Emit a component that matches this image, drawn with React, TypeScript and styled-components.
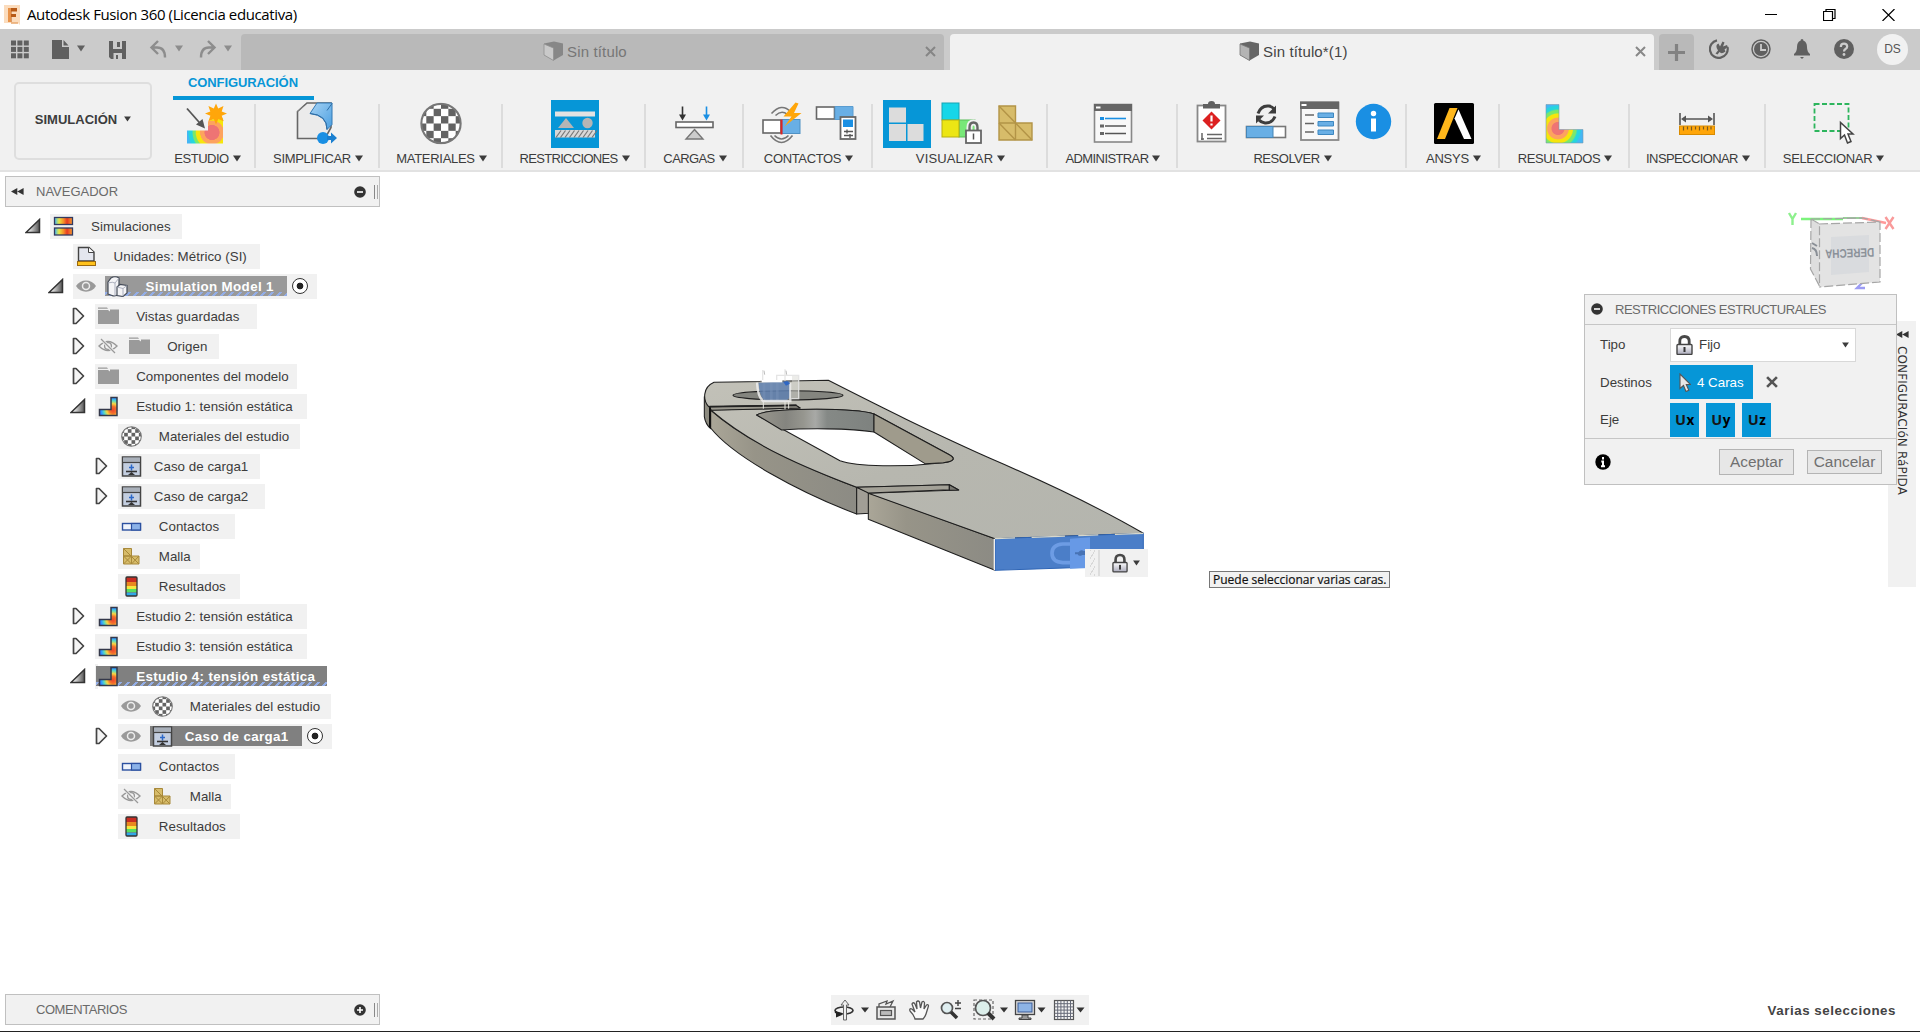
import React from 'react';
import styled, { createGlobalStyle, css } from 'styled-components';

const Global = createGlobalStyle`
  * { box-sizing: border-box; }
  html, body { margin: 0; padding: 0; background: #fff; }
  body { font-family: "Liberation Sans", Arial, sans-serif; color: #3c3c3c; overflow: hidden; }
  svg { display: block; flex: none; }
`;

const Window = styled.div`
  width: 1920px;
  height: 1032px;
  display: flex;
  flex-direction: column;
  background: #fff;
  border-bottom: 1px solid #222;
  overflow: hidden;
`;

/* ---------- title bar ---------- */
const TitleBar = styled.header`
  height: 29px;
  flex: none;
  display: flex;
  align-items: center;
  padding: 0 25px 0 3px;
  gap: 7px;
`;
const AppTitle = styled.span`
  font: 15px/29px "Open Sans", "Noto Sans", sans-serif;
  letter-spacing: -0.38px;
  color: #000;
  flex: 1;
  white-space: nowrap;
`;
const WindowButtons = styled.div`
  display: flex;
  gap: 46px;
  align-items: center;
`;

/* ---------- tab strip ---------- */
const TabStrip = styled.div`
  height: 41px;
  flex: none;
  display: flex;
  background: #cbcbcb;
  align-items: flex-end;
`;
const QuickTools = styled.div`
  width: 241px;
  height: 41px;
  flex: none;
`;
const DocTab = styled.div<{ $active?: boolean; $w: number }>`
  width: ${p => p.$w}px;
  height: 36px;
  flex: none;
  display: flex;
  align-items: center;
  background: ${p => (p.$active ? '#f1f1f1' : '#b9b9b9')};
  border-radius: 4px 4px 0 0;
  color: ${p => (p.$active ? '#444' : '#767676')};
  font-size: 15px;
  margin-right: ${p => (p.$active ? 5 : 6)}px;
  padding: 0 8px 2px 0;
`;
const TabCaption = styled.div<{ $pad: number }>`
  flex: 1;
  display: flex;
  align-items: center;
  gap: 3px;
  padding-left: ${p => p.$pad}px;
  white-space: nowrap;
  letter-spacing: 0.15px;
`;
const NewTab = styled.div`
  width: 35px;
  height: 36px;
  flex: none;
  background: #b9b9b9;
  border-radius: 4px 4px 0 0;
  display: grid;
  place-items: center;
`;
const Account = styled.div`
  flex: 1;
  height: 41px;
  display: flex;
  align-items: center;
  gap: 21.5px;
  padding: 0 0 1px 15px;
`;
const Avatar = styled.div`
  width: 31px;
  height: 31px;
  margin-left: 2px;
  border-radius: 50%;
  background: #f1f1f1;
  display: grid;
  place-items: center;
  font-size: 12px;
  color: #555;
`;

/* ---------- ribbon ---------- */
const Ribbon = styled.div`
  height: 102px;
  flex: none;
  display: flex;
  background: #f1f1f1;
  border-bottom: 2px solid #e2e2e2;
`;
const Workspace = styled.button`
  width: 138px;
  height: 78px;
  margin: 12px 7px 0 14px;
  flex: none;
  border: 2px solid #dedede;
  border-radius: 5px;
  background: #f1f1f1;
  display: flex;
  align-items: center;
  justify-content: center;
  gap: 7px;
  padding: 0 0 4px;
  font: bold 13px "Liberation Sans", Arial, sans-serif;
  color: #3c3c3c;
`;
const RibbonMain = styled.div`
  display: flex;
  flex-direction: column;
`;
const RibbonTab = styled.div`
  width: 141px;
  height: 30px;
  margin-left: 14px;
  padding: 5px 0 0 15px;
  border-bottom: 4px solid #0696d7;
  font-weight: bold;
  font-size: 13px;
  line-height: 15px;
  letter-spacing: -0.1px;
  color: #0696d7;
`;
const Groups = styled.div`
  display: flex;
`;
const Group = styled.div<{ $w: number; $last?: boolean }>`
  width: ${p => p.$w}px;
  height: 68px;
  flex: none;
  display: flex;
  flex-direction: column;
  align-items: center;
  background: ${p => (p.$last ? 'none' : 'linear-gradient(#dcdcdc,#dcdcdc) right 4px / 2px 64px no-repeat')};
`;
const IconRow = styled.div`
  display: flex;
  gap: 6px;
`;
const IconCell = styled.div<{ $on?: boolean }>`
  width: 48px;
  height: 48px;
  background: ${p => (p.$on ? '#0696d7' : 'transparent')};
`;
const GroupLabel = styled.div<{ $ls: number }>`
  display: flex;
  align-items: center;
  gap: 4px;
  height: 20px;
  padding-top: 1px;
  font-size: 13px;
  letter-spacing: ${p => p.$ls}px;
  white-space: nowrap;
  svg { margin-bottom: 1px; }
`;

/* ---------- work area ---------- */
const Stage = styled.main`
  flex: 1;
  position: relative;
  display: flex;
  justify-content: space-between;
`;
const Model = styled.svg`
  position: absolute;
  left: 690px;
  top: 178px;
`;
const LeftColumn = styled.aside`
  width: 380px;
  display: flex;
  flex-direction: column;
  padding: 4px 0 6px 5px;
`;
const PanelBar = styled.div`
  height: 31px;
  flex: none;
  border: 1px solid #c0c0c0;
  background: #f1f1f1;
  display: flex;
  align-items: center;
  font-size: 13px;
  color: #6a6a6a;
  padding: 0 1px 0 5px;
`;
const PanelName = styled.span<{ $ls: number }>`
  flex: 1;
  padding-left: 12px;
  letter-spacing: ${p => p.$ls}px;
`;
const BarStart = styled.span`
  width: 13px;
`;
const Grip = styled.span`
  width: 4px;
  height: 14px;
  margin-left: 8px;
  border-left: 1px solid #888;
  border-right: 1px solid #aaa;
`;
const Tree = styled.ul`
  list-style: none;
  margin: 4px 0 0;
  padding: 0;
  flex: 1;
`;
const TreeRow = styled.li<{ $level: number }>`
  height: 30px;
  display: flex;
  align-items: center;
  padding-left: ${p => 20 + p.$level * 22.6}px;
`;
const Twist = styled.span<{ $closed?: boolean }>`
  width: 25px;
  flex: none;
  padding-left: ${p => (p.$closed ? 1 : 0)}px;
`;
const Chip = styled.div<{ $w: number; $bare?: boolean }>`
  width: ${p => p.$w}px;
  height: 25px;
  flex: none;
  display: flex;
  align-items: center;
  padding-left: 3px;
  background: ${p => (p.$bare ? 'linear-gradient(90deg,#f1f1f1 3px,#fff 3px)' : '#f1f1f1')};
`;
const EyeSlot = styled.span`
  width: 31px;
  flex: none;
`;
const Entry = styled.div<{ $sel?: number; $shade?: string; $text: number; $hatch?: boolean }>`
  height: 20px;
  display: flex;
  align-items: center;
  white-space: nowrap;
  font-size: 13.33px;
  letter-spacing: 0.03px;
  > svg { margin-right: ${p => p.$text}px; }
  ${p =>
    p.$sel &&
    css`
      width: ${p.$sel}px;
      margin-left: -2px;
      padding-left: 2px;
      color: #fff;
      font-weight: bold;
      letter-spacing: 0.38px;
      background: ${p.$shade};
    `}
  ${p =>
    p.$hatch &&
    css`
      background: repeating-linear-gradient(135deg, #93ade6 0 2.2px, transparent 2.2px 5.6px) left bottom / 100% 4px no-repeat, ${p.$shade};
    `}
`;
const RadioMark = styled.span`
  width: 16px;
  height: 16px;
  margin-left: 5px;
  border: 1.5px solid #333;
  border-radius: 50%;
  background: radial-gradient(circle, #222 0 3px, #fff 3.7px);
`;

const NavBar = styled.div`
  position: absolute;
  left: 831px;
  bottom: 6px;
  width: 258px;
  height: 30px;
  background: #f1f1f1;
`;
const MiniBar = styled.div`
  position: absolute;
  left: 1085px;
  top: 377px;
  width: 63px;
  height: 28px;
  background: #f1f1f1;
  display: flex;
  align-items: center;
  gap: 5px;
  padding-left: 5px;
`;
const MiniGrip = styled.span`
  width: 10px;
  height: 26px;
  margin-right: 7px;
  border-right: 2px solid #ddd;
  background: repeating-linear-gradient(120deg, #d8d8d8 0 1px, transparent 1px 4px) left / 5px 100% no-repeat;
`;
const Tooltip = styled.div`
  position: absolute;
  left: 1209px;
  top: 399px;
  width: 181px;
  height: 17px;
  border: 1px solid #767676;
  background: #f1f1f1;
  padding-left: 3px;
  font: 12px/15px "Open Sans", "Noto Sans", sans-serif;
  color: #111;
  white-space: nowrap;
  -webkit-text-stroke: 0.2px #111;
`;

const RightColumn = styled.aside`
  width: 336px;
  display: flex;
  flex-direction: column;
`;
const CubeArea = styled.div`
  height: 122px;
  flex: none;
  padding: 39px 0 0 200px;
`;
const Dialog = styled.section`
  width: 313px;
  height: 191px;
  flex: none;
  position: relative;
  z-index: 1;
  border: 1px solid #c0c0c0;
  background: #f1f1f1;
  display: flex;
  flex-direction: column;
`;
const DialogHead = styled.div`
  height: 30px;
  border-bottom: 1px solid #c6c6c6;
  display: flex;
  align-items: center;
  gap: 12px;
  padding-left: 6px;
  font-size: 13px;
  letter-spacing: -0.48px;
  color: #6a6a6a;
`;
const Fields = styled.div`
  flex: 1;
  padding: 1px 0 0 15px;
`;
const Field = styled.div`
  height: 37.5px;
  display: grid;
  grid-template-columns: 70px 1fr;
  align-items: center;
  font-size: 13.33px;
`;
const Controls = styled.div`
  display: flex;
  align-items: center;
  gap: 7px;
`;
const Select = styled.div`
  width: 186px;
  height: 34px;
  border: 1px solid #d8d8d8;
  background: #fff;
  display: flex;
  align-items: center;
  padding: 0 6px 0 5px;
  gap: 6px;
  span { flex: 1; }
`;
const Targets = styled.button`
  width: 83px;
  height: 34px;
  border: 0;
  margin-right: 6px;
  background: #0696d7;
  color: #fff;
  font: 13.33px "Liberation Sans", Arial, sans-serif;
  display: flex;
  align-items: center;
  gap: 6px;
  padding: 0 0 0 9px;
  white-space: nowrap;
`;
const Axis = styled.button`
  width: 29px;
  height: 34px;
  border: 0;
  padding: 0;
  background: #0696d7;
  color: #161616;
  font: bold 14.5px/34px "Open Sans", sans-serif;
  letter-spacing: -0.5px;
  small { font-size: 13.5px; color: #000; margin-left: 1px; }
`;
const DialogFoot = styled.div`
  height: 46px;
  border-top: 1px solid #c6c6c6;
  display: flex;
  align-items: center;
  padding: 0 14px 0 10px;
`;
const Push = styled.button<{ $tall?: boolean }>`
  width: 75px;
  height: ${p => (p.$tall ? 26 : 24)}px;
  margin-left: ${p => (p.$tall ? 'auto' : '13px')};
  padding: 0;
  border: 1px solid #b4b4b4;
  background: #e7e7e7;
  font: 15.4px "Liberation Sans", Arial, sans-serif;
  color: #707070;
`;
const QuickSetup = styled.div`
  width: 28px;
  height: 266px;
  margin: -164px 0 0 304px;
  flex: none;
  background: #f1f1f1;
  display: flex;
  flex-direction: column;
  align-items: center;
  padding-top: 10px;
  gap: 8px;
`;
const QuickName = styled.span`
  writing-mode: vertical-rl;
  font: 12px "DejaVu Sans", sans-serif;
  letter-spacing: 0.12px;
  white-space: nowrap;
  color: #333;
`;
const Status = styled.div`
  margin-top: auto;
  padding: 0 24px 13px 0;
  text-align: right;
  font-weight: bold;
  font-size: 13.33px;
  letter-spacing: 0.55px;
  color: #444;
`;

/* ---------- drawings ---------- */
const Caret = ({ c = '#3c3c3c', w = 8, h = 7 }: { c?: string; w?: number; h?: number }) => (
  <svg width={w} height={h} viewBox="0 0 8 7"><path d="M0 0.5h8L4 6.5z" fill={c} /></svg>
);
const Rewind = () => (
  <svg width="13" height="7" viewBox="0 0 13 7"><path d="M6.3 0v7L0 3.500zM12.600 0v7L6.300 3.500z" fill="#333" /></svg>
);
const Disc = ({ kind }: { kind: 'minus' | 'plus' }) => (
  <svg width="12" height="12" viewBox="0 0 12 12">
    <circle cx="6" cy="6" r="5.8" fill="#333" />
    <path d={kind === 'minus' ? 'M3 6h6' : 'M3 6h6M6 3v6'} stroke="#fff" strokeWidth="1.6" />
  </svg>
);
const DocCube = ({ dim }: { dim?: boolean }) => (
  <svg width="21" height="20" viewBox="0 0 21 20" opacity={dim ? 0.6 : 1}>
    <path d="M1 2.5L11 0.5 20 2.5V14L10.5 19.5 1 14z" fill="#666" />
    <path d="M1 3L10.5 7V19.5L1 14z" fill={dim ? '#d4d4d4' : '#b4b4b4'} stroke="#777" strokeWidth="0.8" />
  </svg>
);
const Cross = ({ c = '#888', s = 11, w = 2 }: { c?: string; s?: number; w?: number }) => (
  <svg width={s} height={s} viewBox="0 0 11 11"><path d="M1 1l9 9M10 1L1 10" stroke={c} strokeWidth={w} /></svg>
);

const checkerCells: React.ReactNode[] = [];
for (let r = 0; r < 6; r++)
  for (let c = 0; c < 6; c++)
    if ((r + c) % 2) checkerCells.push(<rect key={`${r}-${c}`} x={c * 7 - 1} y={r * 7 - 1} width="7" height="7" fill="#636363" />);
const Checker = ({ size, x = 0, y = 0 }: { size: number; x?: number; y?: number }) => (
  <svg x={x} y={y} width={size} height={size} viewBox="0 0 40 40">
    <clipPath id="checkerClip"><circle cx="20" cy="20" r="18.6" /></clipPath>
    <circle cx="20" cy="20" r="18.6" fill="#fff" />
    <g clipPath="url(#checkerClip)">{checkerCells}</g>
    <circle cx="20" cy="20" r="18.7" fill="none" stroke="#777" strokeWidth="2" />
  </svg>
);

const Defs = styled.svg`
  position: absolute;
`;
const heatColors = ['#ee7474', '#ee7474', '#fda35e', '#fda35e', '#f6e50c', '#f6e50c', '#7be86a', '#7be86a', '#25d6dd', '#25d6dd', '#45b6f5'];
const Palettes = () => (
  <Defs width="0" height="0">
    <defs>
      <radialGradient id="heatStudy" gradientUnits="userSpaceOnUse" cx="29" cy="33" r="27">
        {heatColors.map((c, i) => (
          <stop key={i} offset={[0, 0.27, 0.29, 0.43, 0.45, 0.58, 0.62, 0.7, 0.74, 0.84, 0.9][i]} stopColor={c} />
        ))}
      </radialGradient>
      <radialGradient id="heatResult" gradientUnits="userSpaceOnUse" cx="17" cy="29" r="29">
        {heatColors.map((c, i) => (
          <stop key={i} offset={[0, 0.21, 0.24, 0.36, 0.39, 0.5, 0.54, 0.62, 0.68, 0.76, 0.82][i]} stopColor={c} />
        ))}
      </radialGradient>
      <radialGradient id="heatSmall" gradientUnits="userSpaceOnUse" cx="15" cy="14" r="14">
        <stop offset="0" stopColor="#f0432c" /><stop offset="0.25" stopColor="#f4712c" /><stop offset="0.45" stopColor="#fbd540" />
        <stop offset="0.65" stopColor="#59dcc0" /><stop offset="0.82" stopColor="#35a0ff" /><stop offset="1" stopColor="#2f6cff" />
      </radialGradient>
      <linearGradient id="heatBar" x1="0" x2="1">
        <stop offset="0" stopColor="#3cb8ff" /><stop offset="0.25" stopColor="#e8e640" /><stop offset="0.5" stopColor="#f59028" />
        <stop offset="0.7" stopColor="#e83a22" /><stop offset="1" stopColor="#f8a030" />
      </linearGradient>
      <linearGradient id="blueFace" x1="0" y1="0" x2="1" y2="1"><stop offset="0" stopColor="#a8d4f5" /><stop offset="1" stopColor="#4a9ee0" /></linearGradient>
      <linearGradient id="twist" x1="0" x2="1"><stop offset="0.2" stopColor="#eee" /><stop offset="1" stopColor="#555" /></linearGradient>
      <linearGradient id="body" x1="0" y1="0" x2="0" y2="1"><stop offset="0" stopColor="#fff" /><stop offset="1" stopColor="#aab" /></linearGradient>
      <linearGradient id="top" x1="0" y1="0" x2="1" y2="1"><stop offset="0" stopColor="#c2c1b8" /><stop offset="0.5" stopColor="#b7b7af" /><stop offset="1" stopColor="#b4b5ae" /></linearGradient>
      <linearGradient id="side" x1="0" x2="1"><stop offset="0" stopColor="#aaa698" /><stop offset="0.3" stopColor="#979488" /><stop offset="1" stopColor="#8c8b84" /></linearGradient>
      <linearGradient id="wall" x1="0" x2="1"><stop offset="0" stopColor="#9a988e" /><stop offset="0.25" stopColor="#84847f" /><stop offset="0.4" stopColor="#96968f" /><stop offset="0.5" stopColor="#a8a9a6" /><stop offset="0.6" stopColor="#858986" /><stop offset="1" stopColor="#7e827f" /></linearGradient>
    </defs>
  </Defs>
);

const range = (n: number) => Array.from({ length: n }, (_, i) => i);

const ribbonIcons: Record<string, React.ReactNode> = {
  study: (
    <g transform="translate(-1 0)">
      <path d="M4 31H25V22Q33 17 40 19V44H4z" fill="url(#heatStudy)" />
      <path d="M4 9L19 26" stroke="#555" strokeWidth="1.8" /><path d="M22 29l-9-4 6.500-5.500z" fill="#555" />
      <path d="M33 4l2.200 5 5.300-2.500-1.800 5.500 5.300 2-5.300 2.300 2 5.400-5.400-2.200L33 25l-2.200-5.500-5.400 2.200 2-5.400L22 14l5.300-2-1.900-5.500 5.400 2.500z" fill="#ffa60a" />
    </g>
  ),
  simplify: (
    <g transform="translate(-1 0)">
      <path d="M4.500 12L14 3.500H38V28L32 39H4.500z" fill="#ebebeb" stroke="#666" strokeWidth="1.600" />
      <path d="M4.500 12l6-5" stroke="#888" />
      <path d="M24 3.500H39V25L34 30Q34 16 17 14z" fill="url(#blueFace)" stroke="#3179b5" strokeWidth="1" />
      <path d="M34 11L39 4M17 14Q34 15 34 30" stroke="#2f6ea6" fill="none" />
      <circle cx="30" cy="38.500" r="6" fill="#1a8fe3" /><path d="M34 36.500h4V33l6 5.500-6 5.500v-3.500h-4z" fill="#1a7fd0" />
    </g>
  ),
  checker: <Checker size={42} x={2} y={3} />,
  supports: (
    <>
      <rect x="4" y="12" width="40" height="5" fill="#e2e2e2" /><path d="M7 28.500L15 18.500 23 28.500z" fill="#b5b5b5" /><circle cx="36.500" cy="23.500" r="5.200" fill="#b5b5b5" />
      <rect x="4" y="30.500" width="40" height="7.500" fill="#d8d8d8" />
      {range(9).map(i => <path key={i} d={`M${5 + i * 4.5} 38l5-7`} stroke="#777" strokeWidth="1.200" />)}
    </>
  ),
  loads: (
    <>
      <path d="M11.500 7v11" stroke="#333" strokeWidth="1.600" /><path d="M8 15h7l-3.500 6z" fill="#333" />
      <path d="M35.500 7v11" stroke="#1a8fe3" strokeWidth="1.600" /><path d="M32 15h7l-3.500 6z" fill="#1a8fe3" />
      <rect x="5" y="22.500" width="37" height="5.500" fill="#fff" stroke="#666" strokeWidth="1.600" /><path d="M23.500 30L32 39.500H15z" fill="#ccc" stroke="#777" strokeWidth="1.400" />
    </>
  ),
  contacts: (
    <g transform="translate(0.5 0)">
      <path d="M13 14Q23 3 32 12M17 16q6-6 12-1M12 36q11 14 22 0M16 36q7 7 14 0" fill="none" stroke="#777" strokeWidth="1.600" />
      <rect x="4.500" y="20.500" width="18" height="13" fill="#fff" stroke="#666" strokeWidth="1.600" /><rect x="23.500" y="20" width="18" height="14" fill="#69afe5" stroke="#4f91c4" />
      <path d="M23 20v15" stroke="#d22" strokeWidth="2" /><path d="M37 3L25 17h8L26 27 43 13.500h-7.500L40 4z" fill="#ffa60a" />
    </g>
  ),
  manual: (
    <>
      <rect x="4.500" y="7.500" width="18" height="12" fill="#fff" stroke="#666" strokeWidth="1.600" /><path d="M23 7h18v13H23z" fill="#69afe5" stroke="#5a9cd0" />
      <rect x="28.500" y="17.500" width="15" height="22" fill="#fff" stroke="#666" strokeWidth="1.800" /><rect x="31" y="20" width="10" height="7.500" fill="#1a8fe3" />
      <path d="M32 32h9M32 36h9M35 30v4M38 34.500v4" stroke="#555" strokeWidth="1.300" />
    </>
  ),
  blocks: (
    <g fill="#dcdcdc"><rect x="6" y="8" width="17" height="15" /><rect x="6" y="24.500" width="17" height="17" /><rect x="24.500" y="24.500" width="16" height="17" /></g>
  ),
  locked: (
    <g transform="translate(0.5 0)">
      <rect x="4.500" y="3.500" width="17" height="17" fill="#17d6e8" stroke="#17a4b4" /><rect x="21.500" y="20.500" width="16" height="17" fill="#78e878" stroke="#58bd58" /><rect x="4.500" y="20.500" width="17" height="17" fill="#ece614" stroke="#b8b010" />
      <path d="M32 31v-3q0-5 4-5t4 5v3" fill="none" stroke="#f1f1f1" strokeWidth="6" /><path d="M32 31v-3q0-5 4-5t4 5v3" fill="none" stroke="#666" strokeWidth="2.400" />
      <rect x="28.500" y="31" width="15" height="12.500" fill="#fff" stroke="#666" strokeWidth="1.800" /><path d="M36 34v6" stroke="#555" strokeWidth="1.500" />
    </g>
  ),
  mesh: (
    <g transform="translate(0.5 0)" stroke="#b39447" strokeWidth="1.400" fill="#d7bc6a"><path d="M7.500 6.500H24v17H7.500zM7.500 23.500H24v17H7.500zM24 23.500h16.500v17H24z" /><path d="M7.500 6.500L24 23.500 40.500 40.500M7.500 23.500L24 40.500" fill="none" /></g>
  ),
  manage: (
    <>
      <rect x="5.500" y="5" width="37" height="37.500" fill="#f8f8f8" stroke="#888" strokeWidth="1.600" /><rect x="5" y="4.500" width="38" height="7" fill="#666" /><rect x="7" y="7" width="4.500" height="2" fill="#fff" />
      <path d="M16 19h21" stroke="#1a8fe3" strokeWidth="1.600" /><path d="M16 26.500h21M16 34h21" stroke="#555" strokeWidth="1.600" /><path d="M11 17.500h4v3h-4z" fill="#1a8fe3" /><path d="M11 25h4v3h-4zM11 32.500h4v3h-4z" fill="#666" />
    </>
  ),
  check: (
    <>
      <rect x="9.500" y="6" width="28" height="36" fill="#fff" stroke="#888" strokeWidth="1.800" /><path d="M15 4.500h5q0-3 3.500-3t3.500 3h5v4.500H15z" fill="#606060" />
      <path d="M23.500 12l9 9-9 9-9-9z" fill="#dc2020" /><path d="M23.500 16v6M23.500 24v2" stroke="#fff" strokeWidth="2.200" />
      <path d="M19 35h15M19 39h15M14 33.500v7M13 39.500h3" stroke="#666" strokeWidth="1.500" />
    </>
  ),
  solve: (
    <>
      <path d="M16 14q3-8.500 11-7.500 3 .5 5 3M33 17q-3 7-10 6.500-4-.5-6-3" fill="none" stroke="#3d3d3d" strokeWidth="3" />
      <path d="M34 6v8h-8zM14 24v-8h8z" fill="#3d3d3d" /><rect x="4.500" y="27" width="39" height="11" fill="#fff" stroke="#777" strokeWidth="1.600" /><rect x="4.500" y="27" width="26.500" height="11" fill="#69afe5" stroke="#4785b5" strokeWidth="1" />
    </>
  ),
  details: (
    <>
      <rect x="5" y="3" width="37.500" height="37.500" fill="#f8f8f8" stroke="#888" strokeWidth="1.800" /><rect x="4" y="2" width="39" height="7.500" fill="#666" /><rect x="5.500" y="4.500" width="5" height="2" fill="#fff" />
      <path d="M9 15.500h9M9 24h9M9 32.500h9" stroke="#666" strokeWidth="1.500" /><g fill="#69afe5" stroke="#3d87c0"><path d="M22 13.500h15.500V18H22zM22 22h15.500v4.500H22zM22 30.500h15.500V35H22z" /></g>
    </>
  ),
  info: (<><circle cx="23.500" cy="22" r="17.700" fill="#1a8fe3" /><circle cx="23.500" cy="14" r="2.700" fill="#fff" /><rect x="21" y="19" width="5" height="13" fill="#fff" /></>),
  ansys: (<><rect x="4" y="3.500" width="40" height="41" rx="1.500" fill="#000" /><path d="M19.500 8.500h8L15 39.500H7z" fill="#ffb71b" /><path d="M28.500 10L41.500 39.500H34L24.500 19z" fill="#fff" /></>),
  results: <path d="M5 5h13v25h24v13.500H5z" fill="url(#heatResult)" stroke="#7a9ab0" strokeWidth="0.600" />,
  inspect: (
    <>
      <path d="M6 13.500v12M40 13.500v12M9 19.500h28" stroke="#555" strokeWidth="1.600" /><path d="M7 19.500l5-3.500v7zM39 19.500l-5-3.500v7z" fill="#555" /><rect x="5.500" y="26.500" width="35" height="8.500" fill="#ffa60a" stroke="#d98b00" />
      <path d="M9.500 27v4M13.500 27v3M17.500 27v4M21.500 27v3M25.500 27v4M29.500 27v3M33.500 27v4M37 27v3" stroke="#7a5a20" strokeWidth="1.200" />
    </>
  ),
  select: (<g transform="translate(-1.5 0)"><rect x="6" y="4.500" width="34" height="27" fill="none" stroke="#2db55d" strokeWidth="1.800" strokeDasharray="5 2.500" /><path d="M32 23v16l4-3.500 3 8 3.500-1.500-3-7.500h5z" fill="#fff" stroke="#444" strokeWidth="1.500" /></g>),
};

const ribbonGroups: { label: string; w: number; icons: string[]; on?: string; ls?: number }[] = [
  { label: 'ESTUDIO', w: 97, icons: ['study'], ls: -0.5 },
  { label: 'SIMPLIFICAR', w: 124, icons: ['simplify'], ls: -0.35 },
  { label: 'MATERIALES', w: 123, icons: ['checker'], ls: -0.3 },
  { label: 'RESTRICCIONES', w: 143, icons: ['supports'], on: 'supports', ls: -0.68 },
  { label: 'CARGAS', w: 98, icons: ['loads'] },
  { label: 'CONTACTOS', w: 129, icons: ['contacts', 'manual'], ls: -0.35 },
  { label: 'VISUALIZAR', w: 175, icons: ['blocks', 'locked', 'mesh'], on: 'blocks', ls: 0.15 },
  { label: 'ADMINISTRAR', w: 130, icons: ['manage'] },
  { label: 'RESOLVER', w: 229, icons: ['check', 'solve', 'details', 'info'], ls: -0.45 },
  { label: 'ANSYS', w: 93, icons: ['ansys'], ls: -0.2 },
  { label: 'RESULTADOS', w: 130, icons: ['results'], ls: -0.35 },
  { label: 'INSPECCIONAR', w: 136, icons: ['inspect'] },
  { label: 'SELECCIONAR', w: 135, icons: ['select'], ls: -0.35 },
];

const Eye = ({ off }: { off?: boolean }) =>
  off ? (
    <svg width="20" height="16" viewBox="0 0 20 16"><path d="M1 8Q10-1 19 8 10 17 1 8z" fill="none" stroke="#999" strokeWidth="1.400" /><circle cx="10" cy="8" r="3.400" fill="none" stroke="#999" strokeWidth="1.400" /><path d="M3 1l14 14" stroke="#f1f1f1" strokeWidth="3" /><path d="M3 1l14 14" stroke="#999" strokeWidth="1.300" /></svg>
  ) : (
    <svg width="20" height="16" viewBox="0 0 20 16"><path d="M0 8C4 .5 16 .5 20 8 16 15.500 4 15.500 0 8z" fill="#999" /><circle cx="10" cy="8" r="3.500" fill="#999" stroke="#ececec" strokeWidth="1.500" /></svg>
  );

const treeIcons: Record<string, React.ReactNode> = {
  sims: <g stroke="#333a60" strokeWidth="1.300"><rect x="1.500" y="1.500" width="18" height="7" fill="url(#heatBar)" /><rect x="1.500" y="12" width="18" height="7" fill="url(#heatBar)" /></g>,
  units: (<><path d="M2.500 15V1.500H13L18 6v9z" fill="#e4e6ee" stroke="#444" strokeWidth="1.400" /><path d="M12.500 1.500V6.500H18" fill="#fff" stroke="#444" /><rect x="1.500" y="15.500" width="18" height="4" fill="#ffc21c" stroke="#9b6a10" /></>),
  model: (<g fill="#f4f4f6" stroke="#444b58" strokeWidth="1.200"><path d="M1 6L4 2Q8-.5 12 2V18Q8 21 5 19.500L1 18z" /><path d="M10 11l3-2.500 7 1V17l-4 3.500-6-1z" /><path d="M1 7q5-1.500 7 0l4-5M8 7v13M10 11l6 1.500 4-3M16 12.500v8" fill="none" stroke="#9aa0b0" strokeWidth="0.800" /></g>),
  folder: <path d="M0 4h10l2 1.500V3.500h9V18H0zM0 1.500h9l1 1.300H0z" fill="#9a9a9a" />,
  study: <path d="M13 1.500h6V19.500H1.500v-6H13z" fill="url(#heatSmall)" stroke="#34384a" strokeWidth="1.500" />,
  checker: <Checker size={21} />,
  load: (<><rect x="1.500" y="1" width="18" height="19" fill="#c3cee0" stroke="#444" strokeWidth="1.500" /><rect x="2" y="1.500" width="17" height="5" fill="#a9b0ba" /><path d="M2 6.500h17" stroke="#444" strokeWidth="1.200" /><path d="M10.500 8.500v6M8 11.500h5" stroke="#2c68c8" strokeWidth="1.500" /><path d="M5 15.500h11" stroke="#333" strokeWidth="1.600" /><path d="M7 19l3.500-3 3.500 3z" fill="#333" /></>),
  contact: (<><rect x="1.500" y="7.500" width="18" height="6.500" fill="#eef3fb" stroke="#2b50a0" strokeWidth="1.400" /><rect x="10.500" y="7.500" width="9" height="6.500" fill="#8bb2e8" stroke="#2b50a0" strokeWidth="1.200" /></>),
  mesh: (<g stroke="#a8893a" strokeWidth="1" fill="#d7bc6a"><path d="M2.500 2.500h8V10h-8zM2.500 10h8v8h-8zM10.500 10H18v8h-7.500z" /><path d="M2.500 2.500l15.500 15.500M2.500 10l8 8M10.500 10l-8 8M18 10l-7.500 8" fill="none" /></g>),
  result: (<g transform="translate(-1 0)"><rect x="6" y="1" width="11" height="19" fill="#c92d22" /><rect x="6" y="6" width="11" height="4" fill="#e98820" /><rect x="6" y="10" width="11" height="3" fill="#f5e840" /><rect x="6" y="13" width="11" height="3.500" fill="#58e060" /><rect x="6" y="16.500" width="11" height="3.500" fill="#2fa8e8" /><rect x="6" y="1" width="11" height="19" rx="1" fill="none" stroke="#333" strokeWidth="1.300" /></g>),
};

type Node = { t: string; lv: number; icon: string; w: number; tw?: 'open' | 'closed'; eye?: 'on' | 'off'; sel?: number; shade?: string; hatch?: boolean; radio?: boolean; bare?: boolean; gap?: number };
const nodes: Node[] = [
  { t: 'Simulaciones', lv: 0, icon: 'sims', w: 132, tw: 'open' },
  { t: 'Unidades: Métrico (SI)', lv: 1, icon: 'units', w: 187 },
  { t: 'Simulation Model 1', lv: 1, icon: 'model', w: 244, tw: 'open', eye: 'on', sel: 182, shade: '#999', hatch: true, radio: true, gap: 18 },
  { t: 'Vistas guardadas', lv: 2, icon: 'folder', w: 162, tw: 'closed' },
  { t: 'Origen', lv: 2, icon: 'folder', w: 124, tw: 'closed', eye: 'off' },
  { t: 'Componentes del modelo', lv: 2, icon: 'folder', w: 202, tw: 'closed' },
  { t: 'Estudio 1: tensión estática', lv: 2, icon: 'study', w: 212, tw: 'open' },
  { t: 'Materiales del estudio', lv: 3, icon: 'checker', w: 182 },
  { t: 'Caso de carga1', lv: 3, icon: 'load', w: 142, tw: 'closed', gap: 12 },
  { t: 'Caso de carga2', lv: 3, icon: 'load', w: 147, tw: 'closed', gap: 12 },
  { t: 'Contactos', lv: 3, icon: 'contact', w: 117 },
  { t: 'Malla', lv: 3, icon: 'mesh', w: 82 },
  { t: 'Resultados', lv: 3, icon: 'result', w: 122 },
  { t: 'Estudio 2: tensión estática', lv: 2, icon: 'study', w: 212, tw: 'closed' },
  { t: 'Estudio 3: tensión estática', lv: 2, icon: 'study', w: 212, tw: 'closed' },
  { t: 'Estudio 4: tensión estática', lv: 2, icon: 'study', w: 233, tw: 'open', sel: 231, shade: '#808080', hatch: true, bare: true },
  { t: 'Materiales del estudio', lv: 3, icon: 'checker', w: 213, eye: 'on' },
  { t: 'Caso de carga1', lv: 3, icon: 'load', w: 214, tw: 'closed', eye: 'on', sel: 152, shade: '#808080', radio: true, gap: 12 },
  { t: 'Contactos', lv: 3, icon: 'contact', w: 117 },
  { t: 'Malla', lv: 3, icon: 'mesh', w: 113, eye: 'off' },
  { t: 'Resultados', lv: 3, icon: 'result', w: 122 },
];

const QuickIcons = () => (
  <svg width="241" height="41" viewBox="0 0 241 41">
    <g fill="#606060">
      {range(3).map(r => range(3).map(c => <rect key={`${r}${c}`} x={11 + c * 6.4} y={11.5 + r * 6.4} width="5" height="5" />))}
      <path d="M52 11h10v7h7v12H52zM63.500 11l5 5.500h-5z" />
      <path d="M109 12h17v18h-15l-2-2zM113 12v8h9v-8zM113.500 24v6h8.500v-6z" fillRule="evenodd" /><path d="M117 13h3v5h-3zM116 26h2v4h-2z" />
      <path d="M77 16.500h8l-4 6z" />
    </g>
    <g fill="#8d8d8d"><path d="M175 16.500h8l-4 6zM224 16.500h8l-4 6z" /></g>
    <path d="M158 12l-6.500 6.500 6.500 6.500M152 18.500h5q8 0 8 10" fill="none" stroke="#8d8d8d" strokeWidth="2.400" />
    <path d="M208 12l6.500 6.500-6.500 6.500M214 18.500h-5q-8 0-8 10" fill="none" stroke="#8d8d8d" strokeWidth="2.400" />
  </svg>
);

const Padlock = ({ w = 17, h = 20 }: { w?: number; h?: number }) => (
  <svg width={w} height={h} viewBox="0 0 17 20">
    <path d="M3.800 10V6.500Q3.800 1.500 8.500 1.500T13.200 6.500V10" fill="none" stroke="#484848" strokeWidth="2.800" />
    <rect x="1" y="9.500" width="15" height="10" rx="1" fill="url(#body)" stroke="#444" strokeWidth="1.400" /><rect x="7.500" y="12" width="2" height="5" fill="#333" />
  </svg>
);

const Bracket = () => (
  <Model width="480" height="240" viewBox="0 0 1440 720">
    <g stroke="#1e1e1e" strokeWidth="3.200" strokeLinejoin="round">
      <path d="M43 140L43 200Q46 222 62 236V178z" fill="#8d8b80" />
      <path d="M62 180C150 260 300 335 500 412V492C330 428 130 320 62 234z" fill="url(#side)" />
      <path d="M500 412L538 428V490L500 492z" fill="#a19e96" />
      <path d="M535 428L915 566V661L535 508z" fill="url(#side)" />
      <path d="M72 97L415 91C600 185 690 230 900 325 1070 398 1240 480 1360 550L915 566 535 430 806 420 778 404 500 412C350 355 190 290 62 180L330 174 318 166 56 170C38 150 38 112 72 97z" fill="url(#top)" />
      <path d="M58 170l260-4 12 8-266 7z" fill="#9b998f" />
      <path d="M500 412l278-8v15L535 429z" fill="#a3a197" /><path d="M778 404l28 16-28 1z" fill="#7b7a73" />
      <ellipse cx="294" cy="136" rx="165" ry="14" fill="#84857f" />
      <path d="M200 195C225 180 330 178 380 178 440 178 520 182 552 192L778 314C798 325 792 335 760 338 640 352 500 350 450 332z" fill="#fff" />
      <path d="M200 195C225 180 330 178 380 178 440 178 520 182 552 192V246C480 234 340 235 275 240z" fill="url(#wall)" />
      <path d="M552 192L778 314C798 325 792 335 760 338L705 341 552 246z" fill="#9f9b8c" />
    </g>
    <path d="M60 172V234" stroke="#111" strokeWidth="6" /><path d="M58 170L320 166" stroke="#222" strokeWidth="5" />
    <path d="M915 566L1360 550V646L915 661z" fill="#4b7ec8" stroke="#2f65b5" strokeWidth="3" />
    <path d="M915 566L1360 550" stroke="#d8d8cc" strokeWidth="4" strokeDasharray="60 50 100 40" /><path d="M913 566V661" stroke="#eee" strokeWidth="4" />
    <path d="M1140 566l60-4v92l-60 2z" fill="#6799e6" />
    <path d="M1140 582h-22q-32 2-32 28t32 28h22" fill="none" stroke="#6d9ce4" strokeWidth="11" />
    <path d="M1155 607h10q8-10 16-4h6v12h-10q-10 6-14-2h-8z" fill="#4873b5" />
    <path d="M205 98L300 94V135Q300 154 270 154H230Q210 150 205 98z" fill="#5f80b0" opacity="0.850" />
    <path d="M222 98v52M244 98v54M262 98v54" stroke="#7892b8" strokeWidth="8" opacity="0.500" />
    <path d="M201 98q2 42 18 55h82V98" fill="none" stroke="#eeefef" strokeWidth="7" opacity="0.850" />
    <path d="M306 78h20v66h-20z" fill="#d9d9d4" opacity="0.500" />
    <path d="M218 92V60M285 92V58M210 92h50V76h66v70h-22" fill="none" stroke="#e2e2e2" strokeWidth="4" opacity="0.900" />
    <path d="M222 62l2 12M288 62l2 12" stroke="#bbb" strokeWidth="3" />
    <path d="M280 96l12-3 8 8-12 6z" fill="#2e66c4" /><path d="M215 90h62v7h-62z" fill="#fff" />
    <path d="M220 156v20M285 156v22M296 156v20" stroke="#e8e8e2" strokeWidth="3" />
  </Model>
);

const ViewCube = () => (
  <svg width="120" height="80" viewBox="1784 211 120 80">
    <path d="M1801 219h42" stroke="#7cf37c" strokeWidth="2.500" /><path d="M1843 218h20" stroke="#9c9" strokeWidth="2" /><path d="M1862 218l24 5" stroke="#f99" strokeWidth="2.500" />
    <path d="M1789 213l3.500 6v6M1796 213l-3.500 6" fill="none" stroke="#8df08d" strokeWidth="2.400" />
    <path d="M1885.500 217l8 12M1893.500 217l-8 12" stroke="#f99a9a" strokeWidth="2.400" />
    <path d="M1857 281h7l-7 7h8" fill="none" stroke="#9c9cf4" strokeWidth="2.400" />
    <path d="M1811 220l8.500 4v63l-9-18z" fill="#dedede" /><path d="M1819 224l61-2v60l-60 5z" fill="#e3e3e3" /><path d="M1831 237l38-2v37l-38 3z" fill="#d9dbde" />
    <path d="M1811 219l8.500 5v62l-9-17zM1819 224l61-2v60l-61 5M1811 219l52-1 17 4" fill="none" stroke="#a6a6a6" strokeWidth="1.200" strokeDasharray="9 3" />
    <path d="M1812 243l5 3M1812 248q5 1 5 8" stroke="#8a8f96" strokeWidth="2" fill="none" />
    <text transform="translate(1874 248) rotate(178)" fontFamily="Liberation Sans" fontWeight="bold" fontSize="12.500" textLength="49" lengthAdjust="spacingAndGlyphs" fill="#8b9199">DERECHA</text>
  </svg>
);

const NavTools = () => (
  <svg width="258" height="30" viewBox="0 0 258 30">
    <ellipse cx="13" cy="15.500" rx="9" ry="3.500" fill="none" stroke="#333" strokeWidth="1.700" /><path d="M12.500 25V10H10l4-5 4 5h-2.500v15z" fill="#eee" stroke="#666" strokeWidth="1" /><path d="M11 20l-6-3.500v6z" fill="#222" /><path d="M4 17l7 2" stroke="#222" strokeWidth="2" />
    <g fill="#333"><path d="M30 12.500h8l-4 5zM169 12.500h8l-4 5zM206.500 12.500h8l-4 5zM245.500 12.500h8l-4 5z" /></g>
    <path d="M48 12V9l8-3-1 3 7-3-3 6" fill="#eee" stroke="#555" strokeWidth="1.300" /><rect x="46" y="12" width="18" height="12" fill="#e8e8e8" stroke="#555" strokeWidth="1.500" /><rect x="49.500" y="15.500" width="11" height="5" fill="#bbb" stroke="#555" strokeWidth="1.200" />
    <path d="M84 24q-1-4-5-8-1-3 2-2l3 3-3-8q1-2.500 3 0l2 5-.5-7q1.500-2 3 0l1 6 1.500-6q2-1.500 2.500 1L93 14l2.500-4q2-1 2 1L95 19q-1 3-3 5z" fill="#fafafa" stroke="#555" strokeWidth="1.300" />
    <circle cx="116" cy="13" r="5.500" fill="#dfeef0" stroke="#555" strokeWidth="1.700" /><path d="M120 17l6 6" stroke="#333" strokeWidth="3.500" /><path d="M124 8h6M127 5v6M124 13.500h6" stroke="#444" strokeWidth="1.400" />
    <rect x="143" y="5" width="19" height="19" fill="none" stroke="#666" strokeWidth="1.200" strokeDasharray="3 2" /><circle cx="152" cy="13" r="7.500" fill="#dceeea" stroke="#555" strokeWidth="1.700" /><path d="M157 18l6 6" stroke="#333" strokeWidth="4" />
    <rect x="184.500" y="5.500" width="19" height="14" fill="#ddd" stroke="#444" strokeWidth="1.300" /><rect x="187" y="8" width="14" height="9" fill="#8db4e6" stroke="#3a5b96" /><path d="M191 20h6v3h3v1.500h-12V23h3z" fill="#999" stroke="#444" strokeWidth="1" />
    <rect x="223.500" y="5.500" width="19" height="19" fill="#f4f4f4" stroke="#555" strokeWidth="1.200" />
    {range(5).map(i => <path key={i} d={`M${226.7 + i * 3.2} 5.500v19M223.500 ${8.7 + i * 3.2}h19`} stroke="#666a78" strokeWidth="1" />)}
  </svg>
);

const AccountIcons = () => (
  <>
    <svg width="20" height="20" viewBox="0 0 20 20"><path d="M8 1.300A8.900 8.900 0 1 0 18.500 8" fill="none" stroke="#606060" strokeWidth="2.200" /><path d="M6.500 14.500L9 11.500Q5.500 6 9.500 4.500L11 7.500 13.500 2.500l2 1-1.500 4 4-1.500.8 2-3.300 2.500 1 2Q12.500 15.500 10.500 13l-2 2.500z" fill="#606060" /></svg>
    <svg width="20" height="20" viewBox="0 0 20 20"><circle cx="10" cy="10" r="9" fill="none" stroke="#606060" strokeWidth="1.500" /><circle cx="10" cy="10" r="7" fill="#606060" /><path d="M10 5v6h5" fill="none" stroke="#ccc" strokeWidth="1.800" /></svg>
    <svg width="20" height="20" viewBox="0 0 20 20"><path d="M10 0q1.500 0 1.500 1.800Q15 3 15 8q0 5 3 7v1.500H2V15q3-2 3-7 0-5 3.500-6.200Q8.500 0 10 0zM8 18h4l-2 2z" fill="#606060" /></svg>
    <svg width="20" height="20" viewBox="0 0 20 20"><circle cx="10" cy="10" r="10" fill="#606060" /><path d="M6.800 8q0-3.300 3.200-3.300T13.200 7.500Q13.200 9 11.500 10 10 11 10 12.500" fill="none" stroke="#ccc" strokeWidth="2.200" /><circle cx="10" cy="15.500" r="1.400" fill="#ccc" /></svg>
  </>
);

export default function App() {
  return (
    <Window>
      <Global />
      <Palettes />
      <TitleBar>
        <svg width="17" height="20" viewBox="0 0 17 20"><path d="M1 0h16v20l-2-2H1z" fill="#fbdcbd" /><path d="M5 3h9v3.500H8.500V9H13v3H8.500v5H5z" fill="#b75a17" /><path d="M5 3h3v14H5z" fill="#e8934a" /><path d="M8 18h7" stroke="#e9a76c" strokeWidth="1.500" /></svg>
        <AppTitle>Autodesk Fusion 360 (Licencia educativa)</AppTitle>
        <WindowButtons>
          <svg width="12" height="12" viewBox="0 0 12 12"><path d="M0 5.500h12" stroke="#000" /></svg>
          <svg width="13" height="12" viewBox="0 0 13 12"><path d="M.5 2.500h9v9h-9zM3 2V.5h9V9.500h-2" fill="none" stroke="#000" strokeWidth="1.200" /></svg>
          <svg width="13" height="12" viewBox="0 0 13 12"><path d="M.5 0l12 12M12.500 0L.5 12" stroke="#000" strokeWidth="1.200" /></svg>
        </WindowButtons>
      </TitleBar>

      <TabStrip>
        <QuickTools><QuickIcons /></QuickTools>
        <DocTab $w={703}><TabCaption $pad={302}><DocCube dim />Sin título</TabCaption><Cross c="#858585" /></DocTab>
        <DocTab $w={704} $active><TabCaption $pad={289}><DocCube />Sin título*(1)</TabCaption><Cross /></DocTab>
        <NewTab><svg width="17" height="17" viewBox="0 0 17 17"><path d="M0 8.500h17M8.500 0v17" stroke="#828282" strokeWidth="3.200" /></svg></NewTab>
        <Account><AccountIcons /><Avatar>DS</Avatar></Account>
      </TabStrip>

      <Ribbon>
        <Workspace>SIMULACIÓN <Caret h={6} w={7} /></Workspace>
        <RibbonMain>
          <RibbonTab>CONFIGURACIÓN</RibbonTab>
          <Groups>
            {ribbonGroups.map((g, i) => (
              <Group key={g.label} $w={g.w} $last={i === ribbonGroups.length - 1}>
                <IconRow>
                  {g.icons.map(k => (
                    <IconCell key={k} $on={g.on === k}><svg width="48" height="48" viewBox="0 0.5 48 48">{ribbonIcons[k]}</svg></IconCell>
                  ))}
                </IconRow>
                <GroupLabel $ls={g.ls ?? -0.6}>{g.label}<Caret /></GroupLabel>
              </Group>
            ))}
          </Groups>
        </RibbonMain>
      </Ribbon>

      <Stage>
        <Bracket />
        <LeftColumn>
          <PanelBar><BarStart><Rewind /></BarStart><PanelName $ls={0}>NAVEGADOR</PanelName><Disc kind="minus" /><Grip /></PanelBar>
          <Tree>
            {nodes.map((n, i) => (
              <TreeRow key={i} $level={n.lv}>
                <Twist $closed={n.tw === 'closed'}>
                  {n.tw === 'open' && <svg width="16" height="16" viewBox="0 0 16 16"><path d="M1 14.500L14.500 1.500v13z" fill="url(#twist)" stroke="#333" strokeWidth="1.500" /></svg>}
                  {n.tw === 'closed' && <svg width="14" height="18" viewBox="0 0 14 18"><path d="M2.500 1.500L5 1.500 12.500 9 5 16.500H2.500z" fill="#f4f4f4" stroke="#444" strokeWidth="1.700" strokeLinejoin="round" /></svg>}
                </Twist>
                <Chip $w={n.w} $bare={n.bare}>
                  {n.eye && <EyeSlot><Eye off={n.eye === 'off'} /></EyeSlot>}
                  <Entry $sel={n.sel} $shade={n.shade} $hatch={n.hatch} $text={n.gap ?? 17}>
                    <svg width="21" height="21" viewBox="0 0 21 21">{treeIcons[n.icon]}</svg>
                    {n.t}
                  </Entry>
                  {n.radio && <RadioMark />}
                </Chip>
              </TreeRow>
            ))}
          </Tree>
          <PanelBar><BarStart /><PanelName $ls={-0.45}>COMENTARIOS</PanelName><Disc kind="plus" /><Grip /></PanelBar>
        </LeftColumn>

        <MiniBar><MiniGrip /><Padlock w={16} h={20} /><Caret w={7} h={6} /></MiniBar>
        <Tooltip>Puede seleccionar varias caras.</Tooltip>
        <NavBar><NavTools /></NavBar>

        <RightColumn>
          <CubeArea><ViewCube /></CubeArea>
          <Dialog>
            <DialogHead><Disc kind="minus" />RESTRICCIONES ESTRUCTURALES</DialogHead>
            <Fields>
              <Field>Tipo<Select><Padlock /><span>Fijo</span><Caret w={7} h={6} /></Select></Field>
              <Field>
                Destinos
                <Controls>
                  <Targets><svg width="12" height="19" viewBox="0 0 12 19"><path d="M1 1v14.500l3.500-3 2.500 6 2.800-1.200-2.500-5.800h4.200z" fill="#e6e6e6" stroke="#555" strokeWidth="1.100" /></svg>4 Caras</Targets>
                  <Cross c="#555" s={12} w={2.4} />
                </Controls>
              </Field>
              <Field>Eje<Controls><Axis>U<small>x</small></Axis><Axis>U<small>y</small></Axis><Axis>U<small>z</small></Axis></Controls></Field>
            </Fields>
            <DialogFoot>
              <svg width="16" height="16" viewBox="0 0 16 16"><circle cx="8" cy="8" r="7.700" fill="#000" /><path d="M8 3v2.400M6.300 7.500H8V12M6 12.300h4" stroke="#fff" strokeWidth="2" fill="none" /></svg>
              <Push $tall>Aceptar</Push><Push>Cancelar</Push>
            </DialogFoot>
          </Dialog>
          <QuickSetup><Rewind /><QuickName>CONFIGURACIóN RáPIDA</QuickName></QuickSetup>
          <Status>Varias selecciones</Status>
        </RightColumn>
      </Stage>
    </Window>
  );
}
